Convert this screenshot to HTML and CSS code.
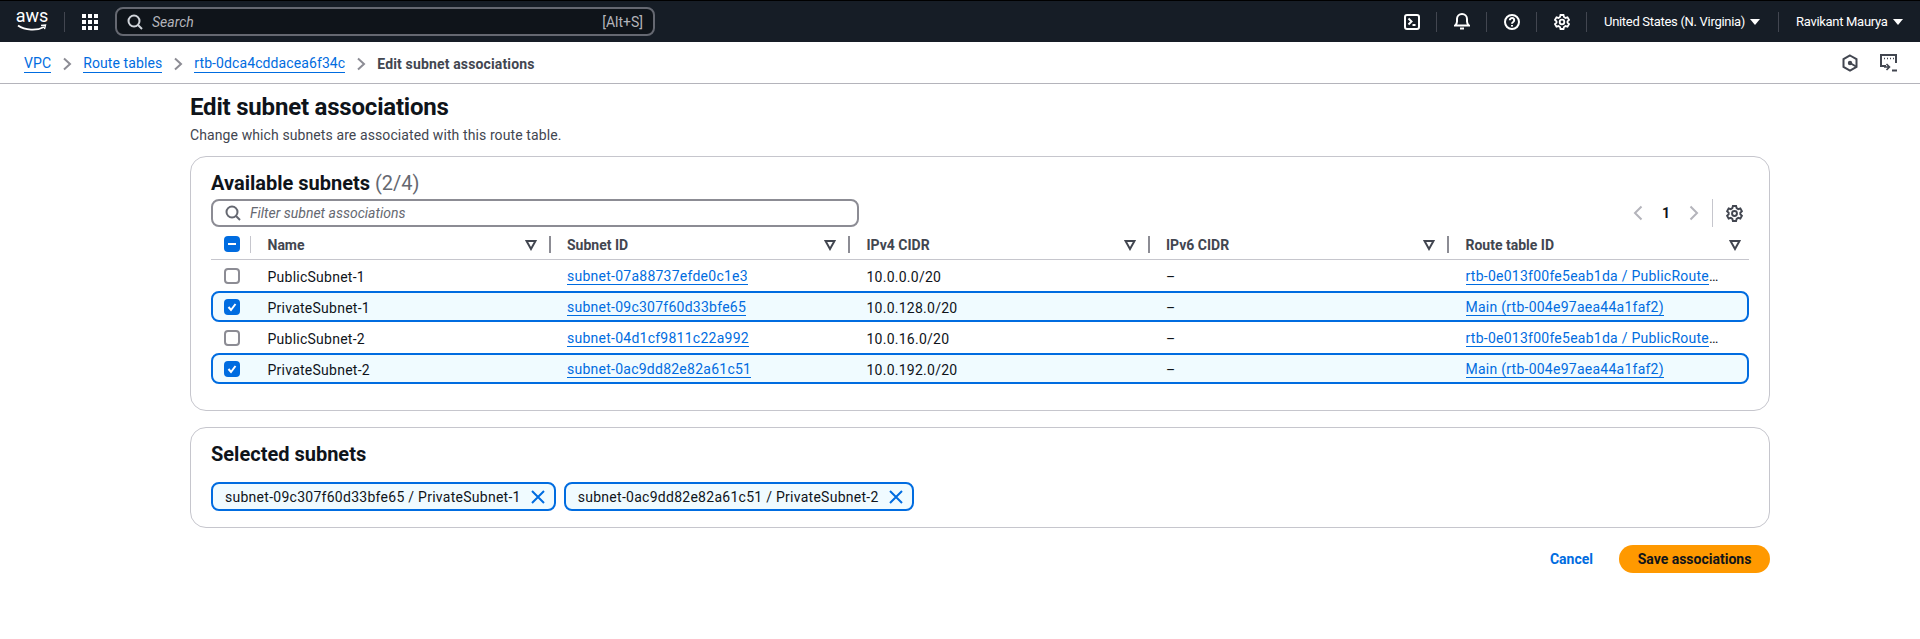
FILE: index.html
```html
<!DOCTYPE html>
<html lang="en">
  <head>
    <meta charset="UTF-8" />
    <title>Edit subnet associations</title>
    <link rel="stylesheet" href="styles.css">
  </head>
  <body>
    <!-- Top navigation -->
    <header class="topnav">
      <div class="logo">
        <span class="logo-text">aws</span>
        <svg class="logo-smile" width="30" height="8" viewBox="0 0 30 8"><path d="M1 1.500C8 6.500 20 7 27 3" fill="none" stroke="#fff" stroke-width="1.800"/><path d="M24 1.500l4.500-.5-1 4.200" fill="none" stroke="#fff" stroke-width="1.400"/></svg>
      </div>
      <span class="nav-div nav-div-logo"></span>
      <svg class="apps" width="16" height="16" viewBox="0 0 16 16" fill="#fff"><rect width="4" height="4"/><rect x="6" width="4" height="4"/><rect x="12" width="4" height="4"/><rect y="6" width="4" height="4"/><rect x="6" y="6" width="4" height="4"/><rect x="12" y="6" width="4" height="4"/><rect y="12" width="4" height="4"/><rect x="6" y="12" width="4" height="4"/><rect x="12" y="12" width="4" height="4"/></svg>
      <div class="global-search">
        <svg width="16" height="16" viewBox="0 0 16 16" fill="none" stroke="#d1d5db" stroke-width="2"><circle cx="7" cy="7" r="5.500"/><path d="M11 11l4 4"/></svg>
        <span class="global-search-text">Search</span>
        <span class="global-search-key">[Alt+S]</span>
      </div>
      <div class="nav-right">
        <span class="nav-icon">
          <svg width="16" height="16" viewBox="0 0 16 16" fill="none" stroke="#fff" stroke-width="2"><rect x="1" y="1" width="14" height="14" rx="2"/><path d="M4.500 4.500L7.500 7.500 4.500 10.500M8.500 11h3"/></svg>
        </span>
        <span class="nav-div"></span>
        <span class="nav-icon">
          <svg width="16" height="17" viewBox="0 0 16 17" fill="none" stroke="#fff" stroke-width="2"><path d="M1 12.500c1.500-1 2-2.500 2-4V6a5 5 0 0 1 10 0v2.500c0 1.500.5 3 2 4z"/><path d="M6 15.500h4"/></svg>
        </span>
        <span class="nav-div"></span>
        <span class="nav-icon">
          <svg width="16" height="16" viewBox="0 0 16 16" fill="none" stroke="#fff" stroke-width="2"><circle cx="8" cy="8" r="7"/><path d="M5.800 6.200a2.200 2.200 0 1 1 3.400 1.800c-.8.500-1.200 1-1.200 1.800"/><path d="M8 11v1.500"/></svg>
        </span>
        <span class="nav-div"></span>
        <span class="nav-icon">
          <svg width="16" height="16" viewBox="0 0 16 16" fill="none" stroke="#fff" stroke-width="1.800"><circle cx="8" cy="8" r="2.300"/><path d="M6.500 1h3l.5 2 1.500.9 2-.6 1.500 2.600-1.500 1.400v1.400l1.500 1.400-1.500 2.600-2-.6-1.500.9-.5 2h-3l-.5-2-1.500-.9-2 .6L1 10.100l1.500-1.400V7.300L1 5.900l1.500-2.600 2 .6L6 3z"/></svg>
        </span>
        <span class="nav-div"></span>
        <span class="nav-menu nav-region">United States (N. Virginia)<i class="caret"></i></span>
        <span class="nav-div"></span>
        <span class="nav-menu nav-user">Ravikant Maurya<i class="caret"></i></span>
      </div>
    </header>

    <!-- Breadcrumbs -->
    <nav class="crumbs">
      <a class="link" href="#">VPC</a>
      <svg class="crumb-sep" width="10" height="14" viewBox="0 0 10 14"><path d="M2 1.500L8 7l-6 5.500" fill="none" stroke="#8c8c94" stroke-width="2"/></svg>
      <a class="link" href="#">Route tables</a>
      <svg class="crumb-sep" width="10" height="14" viewBox="0 0 10 14"><path d="M2 1.500L8 7l-6 5.500" fill="none" stroke="#8c8c94" stroke-width="2"/></svg>
      <a class="link" href="#">rtb-0dca4cddacea6f34c</a>
      <svg class="crumb-sep" width="10" height="14" viewBox="0 0 10 14"><path d="M2 1.500L8 7l-6 5.500" fill="none" stroke="#8c8c94" stroke-width="2"/></svg>
      <span class="crumb-current">Edit subnet associations</span>
      <div class="crumb-tools">
        <svg width="16" height="18" viewBox="0 0 16 18" fill="none" stroke="#424650" stroke-width="2"><path d="M8 1.500l6.500 3.700v7.600L8 16.500l-6.500-3.700V5.200z"/><circle cx="8" cy="9" r="2.200" fill="#424650" stroke="none"/><path d="M8 9l6 3.500"/></svg>
        <svg width="18" height="18" viewBox="0 0 18 18" fill="none" stroke="#424650" stroke-width="2"><path d="M6 12H1V1h15v8"/><path d="M4 4.500h1M7 4.500h1M10 4.500h1M13 4.500h1" stroke-width="1.500"/><path d="M6 14h5M8.500 11l3 3-3 3" stroke-width="1.600" transform="translate(-2 -1)"/><path d="M12 16.500h5"/></svg>
      </div>
    </nav>

    <main class="content">
      <h1 class="page-title">Edit subnet associations</h1>
      <p class="page-sub">Change which subnets are associated with this route table.</p>

      <!-- Available subnets -->
      <section class="card card-available">
        <h2 class="card-title">Available subnets <span class="count">(2/4)</span></h2>
        <div class="filter-row">
          <div class="filter">
            <svg width="16" height="16" viewBox="0 0 16 16" fill="none" stroke="#656871" stroke-width="2"><circle cx="7" cy="7" r="5.500"/><path d="M11 11l4 4"/></svg>
            <span class="filter-text">Filter subnet associations</span>
          </div>
          <div class="pager">
            <svg width="10" height="16" viewBox="0 0 10 16"><path d="M8.500 1.500L2 8l6.500 6.500" fill="none" stroke="#b4b4bb" stroke-width="2"/></svg>
            <span class="page-num">1</span>
            <svg width="10" height="16" viewBox="0 0 10 16"><path d="M1.500 1.500L8 8l-6.500 6.500" fill="none" stroke="#b4b4bb" stroke-width="2"/></svg>
            <span class="pager-div"></span>
            <svg class="pager-gear" width="17" height="17" viewBox="0 0 16 16" fill="none" stroke="#424650" stroke-width="1.800"><circle cx="8" cy="8" r="2.300"/><path d="M6.500 1h3l.5 2 1.500.9 2-.6 1.500 2.600-1.500 1.400v1.400l1.500 1.400-1.500 2.600-2-.6-1.500.9-.5 2h-3l-.5-2-1.500-.9-2 .6L1 10.100l1.500-1.400V7.300L1 5.900l1.500-2.600 2 .6L6 3z"/></svg>
          </div>
        </div>

        <div class="subnet-table">
          <div class="row row-head">
            <span class="cell-check"><i class="check check-on"><b class="dash"></b></i><span class="head-div head-div-first"></span></span>
            <span class="head-cell">Name<svg class="sort" width="12" height="12" viewBox="0 0 12 12"><path d="M1.500 2h9L6 10z" fill="none" stroke="#424650" stroke-width="2"/></svg><span class="head-div"></span></span>
            <span class="head-cell">Subnet ID<svg class="sort" width="12" height="12" viewBox="0 0 12 12"><path d="M1.500 2h9L6 10z" fill="none" stroke="#424650" stroke-width="2"/></svg><span class="head-div"></span></span>
            <span class="head-cell">IPv4 CIDR<svg class="sort" width="12" height="12" viewBox="0 0 12 12"><path d="M1.500 2h9L6 10z" fill="none" stroke="#424650" stroke-width="2"/></svg><span class="head-div"></span></span>
            <span class="head-cell">IPv6 CIDR<svg class="sort" width="12" height="12" viewBox="0 0 12 12"><path d="M1.500 2h9L6 10z" fill="none" stroke="#424650" stroke-width="2"/></svg><span class="head-div"></span></span>
            <span class="head-cell head-cell-last">Route table ID<svg class="sort" width="12" height="12" viewBox="0 0 12 12"><path d="M1.500 2h9L6 10z" fill="none" stroke="#424650" stroke-width="2"/></svg></span>
          </div>

          <div class="row">
            <span class="cell-check"><i class="check"></i></span>
            <span class="cell">PublicSubnet-1</span>
            <span class="cell"><a class="link" href="#">subnet-07a88737efde0c1e3</a></span>
            <span class="cell">10.0.0.0/20</span>
            <span class="cell">–</span>
            <span class="cell"><a class="link" href="#">rtb-0e013f00fe5eab1da / PublicRoute</a>…</span>
          </div>
          <div class="row row-selected">
            <span class="cell-check"><i class="check check-on"><svg width="12" height="12" viewBox="0 0 12 12"><path d="M2.500 6l2.500 3 4.500-6" fill="none" stroke="#fff" stroke-width="2"/></svg></i></span>
            <span class="cell">PrivateSubnet-1</span>
            <span class="cell"><a class="link" href="#">subnet-09c307f60d33bfe65</a></span>
            <span class="cell">10.0.128.0/20</span>
            <span class="cell">–</span>
            <span class="cell"><a class="link" href="#">Main (rtb-004e97aea44a1faf2)</a></span>
          </div>
          <div class="row">
            <span class="cell-check"><i class="check"></i></span>
            <span class="cell">PublicSubnet-2</span>
            <span class="cell"><a class="link" href="#">subnet-04d1cf9811c22a992</a></span>
            <span class="cell">10.0.16.0/20</span>
            <span class="cell">–</span>
            <span class="cell"><a class="link" href="#">rtb-0e013f00fe5eab1da / PublicRoute</a>…</span>
          </div>
          <div class="row row-selected">
            <span class="cell-check"><i class="check check-on"><svg width="12" height="12" viewBox="0 0 12 12"><path d="M2.500 6l2.500 3 4.500-6" fill="none" stroke="#fff" stroke-width="2"/></svg></i></span>
            <span class="cell">PrivateSubnet-2</span>
            <span class="cell"><a class="link" href="#">subnet-0ac9dd82e82a61c51</a></span>
            <span class="cell">10.0.192.0/20</span>
            <span class="cell">–</span>
            <span class="cell"><a class="link" href="#">Main (rtb-004e97aea44a1faf2)</a></span>
          </div>
        </div>
      </section>

      <!-- Selected subnets -->
      <section class="card card-selected">
        <h2 class="card-title">Selected subnets</h2>
        <div class="tokens">
          <div class="token">
            <span>subnet-09c307f60d33bfe65 / PrivateSubnet-1</span>
            <svg width="16" height="16" viewBox="0 0 16 16"><path d="M2 2l12 12M14 2L2 14" fill="none" stroke="#006ce0" stroke-width="2"/></svg>
          </div>
          <div class="token">
            <span>subnet-0ac9dd82e82a61c51 / PrivateSubnet-2</span>
            <svg width="16" height="16" viewBox="0 0 16 16"><path d="M2 2l12 12M14 2L2 14" fill="none" stroke="#006ce0" stroke-width="2"/></svg>
          </div>
        </div>
      </section>

      <div class="actions">
        <a class="btn-cancel" href="#">Cancel</a>
        <button class="btn-save">Save associations</button>
      </div>
    </main>
  </body>
</html>
```

FILE: styles.css
```css
/* Page */
body {
  font-family: "Roboto", "Noto Sans", sans-serif;
  font-size: 14px;
  color: #0f141a;
  background-color: #fff;
  margin: 0;
  padding: 0;
  height: 639px;
  overflow: hidden;
}

a {
  text-decoration: none;
}

.link {
  color: #006ce0;
  border-bottom: 1px solid #006ce0;
  line-height: 17px;
}

/* Top navigation */
.topnav {
  display: flex;
  align-items: center;
  height: 41px;
  border-top: 1px solid #000;
  background-color: #161d26;
  color: #fff;
  padding-left: 17px;
}

.logo {
  display: flex;
  flex-direction: column;
  align-items: center;
  width: 30px;
  margin-top: -3px;
}

.logo-text {
  font-size: 18px;
  line-height: 14px;
}

.logo-smile {
  margin-top: 1px;
}

.nav-div {
  width: 1px;
  height: 20px;
  background-color: #424650;
}

.nav-div-logo {
  margin-left: 17px;
}

.apps {
  margin-left: 17px;
}

.global-search {
  display: flex;
  align-items: center;
  width: 540px;
  height: 29px;
  box-sizing: border-box;
  margin-left: 17px;
  padding: 0 10px;
  border: 2px solid #656871;
  border-radius: 8px;
  background-color: #0f141a;
  color: #b4b4bb;
}

.global-search-text {
  font-style: italic;
  margin-left: 9px;
}

.global-search-key {
  margin-left: auto;
}

.nav-right {
  display: flex;
  align-items: center;
  margin-left: auto;
}

.nav-icon {
  display: flex;
  justify-content: center;
  width: 49px;
}

.nav-menu {
  display: flex;
  align-items: center;
  font-size: 13px;
  letter-spacing: -0.3px;
}

.nav-region {
  width: 191px;
  padding-left: 17px;
  box-sizing: border-box;
}

.nav-user {
  width: 141px;
  padding-left: 17px;
  box-sizing: border-box;
}

.caret {
  width: 0;
  height: 0;
  margin-left: 5px;
  border-left: 5px solid transparent;
  border-right: 5px solid transparent;
  border-top: 6px solid #fff;
}

/* Breadcrumbs */
.crumbs {
  display: flex;
  align-items: center;
  height: 39px;
  padding: 2px 24px 0;
  border-bottom: 1px solid #b4b4bb;
  letter-spacing: 0.1px;
}

.crumb-sep {
  margin: 0 11px;
}

.crumb-current {
  color: #424650;
  font-weight: 700;
  letter-spacing: 0.15px;
}

.crumb-tools {
  display: flex;
  align-items: center;
  gap: 22px;
  margin-top: -2px;
  margin-left: auto;
  margin-right: -2px;
}

/* Content */
.content {
  width: 1580px;
  margin-left: 190px;
}

.page-title {
  font-size: 24px;
  line-height: 30px;
  font-weight: 700;
  letter-spacing: -0.2px;
  margin: 8px 0 0;
}

.page-sub {
  color: #424650;
  line-height: 20px;
  letter-spacing: 0.1px;
  margin: 3px 0 0;
}

.card {
  box-sizing: border-box;
  border: 1px solid #c6c6cd;
  border-radius: 16px;
  padding: 0 20px;
}

.card-available {
  height: 255px;
  margin-top: 11px;
}

.card-selected {
  height: 101px;
  margin-top: 16px;
}

.card-title {
  font-size: 20px;
  line-height: 24px;
  font-weight: 700;
  margin: 14px 0 0;
}

.count {
  color: #656871;
  font-weight: 400;
}

/* Filter and pager */
.filter-row {
  display: flex;
  align-items: center;
  margin-top: 4px;
}

.filter {
  display: flex;
  align-items: center;
  width: 648px;
  height: 28px;
  box-sizing: border-box;
  padding: 0 12px;
  border: 2px solid #8c8c94;
  border-radius: 8px;
}

.filter-text {
  font-style: italic;
  color: #656871;
  margin-left: 9px;
}

.pager {
  display: flex;
  align-items: center;
  margin-left: auto;
}

.page-num {
  width: 18px;
  text-align: center;
  font-weight: 700;
  margin: 0 14px;
}

.pager-div {
  width: 1px;
  height: 28px;
  margin-left: 13px;
  background-color: #c6c6cd;
}

.pager-gear {
  margin-left: 13px;
  margin-right: 6px;
}

/* Subnet table */
.subnet-table {
  margin-top: 2px;
}

.row {
  display: grid;
  grid-template-columns: 44px repeat(4, 299.5px) 1fr;
  align-items: center;
  height: 31px;
  box-sizing: border-box;
  letter-spacing: 0.25px;
}

.row-head {
  border-bottom: 1px solid #c6c6cd;
  color: #424650;
  font-weight: 700;
  letter-spacing: 0;
}

.row-selected {
  grid-template-columns: 42px repeat(4, 299.5px) 1fr;
  border: 2px solid #006ce0;
  border-radius: 8px;
  background-color: #f0fbff;
}

.cell-check {
  position: relative;
  display: flex;
  align-items: center;
  height: 100%;
  padding-left: 13px;
}

.row-selected .cell-check {
  padding-left: 11px;
}

.check {
  display: flex;
  align-items: center;
  justify-content: center;
  width: 16px;
  height: 16px;
  box-sizing: border-box;
  border: 2px solid #8c8c94;
  border-radius: 4px;
}

.check-on {
  border: none;
  background-color: #006ce0;
}

.dash {
  width: 8px;
  height: 2px;
  background-color: #fff;
}

.cell {
  padding: 2px 0 0 12.5px;
  white-space: nowrap;
}

.head-cell {
  position: relative;
  display: flex;
  align-items: center;
  padding: 2px 0 0 12.5px;
  box-sizing: border-box;
  height: 100%;
}

.sort {
  position: absolute;
  right: 18px;
}

.head-cell-last .sort {
  right: 8px;
}

.head-div {
  position: absolute;
  right: 4px;
  top: 7px;
  width: 2px;
  height: 17px;
  background-color: #8c8c94;
}

.head-div-first {
  right: 4px;
  width: 1px;
  background-color: #c6c6cd;
}

/* Tokens */
.tokens {
  display: flex;
  gap: 8px;
  margin-top: 16px;
}

.token {
  display: flex;
  align-items: center;
  height: 29px;
  box-sizing: border-box;
  padding: 0 8px 0 12px;
  gap: 9px;
  border: 2px solid #006ce0;
  border-radius: 8px;
  background-color: #f0fbff;
  letter-spacing: 0.27px;
}

/* Buttons */
.actions {
  display: flex;
  align-items: center;
  justify-content: flex-end;
  margin-top: 17px;
}

.btn-cancel {
  color: #006ce0;
  font-weight: 700;
  margin-right: 26px;
}

.btn-save {
  width: 151px;
  height: 28px;
  border: none;
  border-radius: 20px;
  background-color: #ff9900;
  color: #0f141a;
  font-family: inherit;
  font-size: 14px;
  font-weight: 700;
}
```
